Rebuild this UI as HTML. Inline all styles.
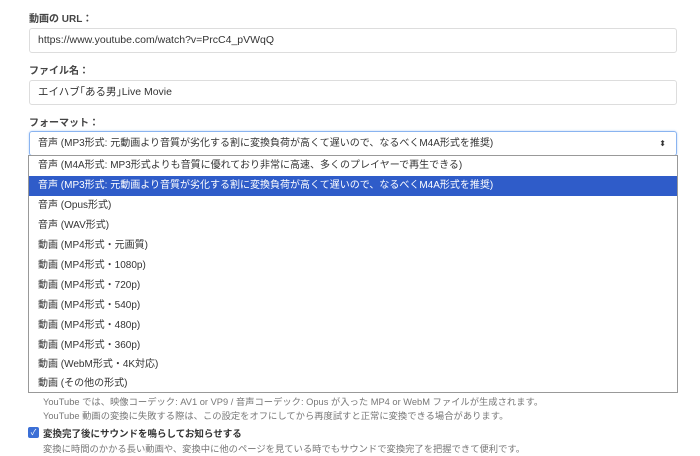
<!DOCTYPE html>
<html><head><meta charset="utf-8"><style>
body{margin:0;width:700px;height:456px;background:#fff;font-family:"Liberation Sans","Noto Sans CJK JP",sans-serif;color:#333;position:relative;overflow:hidden}
.a{position:absolute;white-space:nowrap}
.lbl{font-size:10px;font-weight:bold;color:#444;left:29px}
.inp{left:29px;border:1px solid #ddd;border-radius:3px;font-size:10.5px;line-height:23px;padding-left:8px;box-sizing:border-box;width:648px;height:25px}
.list{left:28px;top:155px;width:650px;height:238px;border:1px solid #999;box-sizing:border-box;background:#fff}
.it{position:absolute;left:0;width:648px;height:20px;line-height:20px;font-size:10px;padding-left:9px;box-sizing:border-box;color:#333}
.hl{background:#2f5cc9;color:#fff}
.help{font-size:9.3px;color:#777;left:43px}
</style></head><body>
<div class="a lbl" style="top:10px">動画の URL：</div>
<div class="a inp" style="top:28px">https://www.youtube.com/watch?v=PrcC4_pVWqQ</div>
<div class="a lbl" style="top:62px">ファイル名：</div>
<div class="a inp" style="top:80px">エイハブ｢ある男｣Live Movie</div>
<div class="a lbl" style="top:114px">フォーマット：</div>
<div class="a inp" style="top:131px;font-size:10px;border-color:#8ab4f0;box-shadow:0 0 2px #b8d2f8">音声 (MP3形式: 元動画より音質が劣化する割に変換負荷が高くて遅いので、なるべくM4A形式を推奨)<span style="position:absolute;right:10px;top:0;font-size:8px">⬍</span></div>
<div class="a list">
<div class="it" style="top:0">音声 (M4A形式: MP3形式よりも音質に優れており非常に高速、多くのプレイヤーで再生できる)</div>
<div class="it hl" style="top:20px">音声 (MP3形式: 元動画より音質が劣化する割に変換負荷が高くて遅いので、なるべくM4A形式を推奨)</div>
<div class="it" style="top:40px">音声 (Opus形式)</div>
<div class="it" style="top:60px">音声 (WAV形式)</div>
<div class="it" style="top:80px">動画 (MP4形式・元画質)</div>
<div class="it" style="top:100px">動画 (MP4形式・1080p)</div>
<div class="it" style="top:120px">動画 (MP4形式・720p)</div>
<div class="it" style="top:140px">動画 (MP4形式・540p)</div>
<div class="it" style="top:160px">動画 (MP4形式・480p)</div>
<div class="it" style="top:180px">動画 (MP4形式・360p)</div>
<div class="it" style="top:199px">動画 (WebM形式・4K対応)</div>
<div class="it" style="top:218px">動画 (その他の形式)</div>
</div>
<div class="a help" style="top:394px">YouTube では、映像コーデック: AV1 or VP9 / 音声コーデック: Opus が入った MP4 or WebM ファイルが生成されます。</div>
<div class="a help" style="top:408px">YouTube 動画の変換に失敗する際は、この設定をオフにしてから再度試すと正常に変換できる場合があります。</div>
<div class="a" style="left:28px;top:427px;width:11px;height:11px;background:#3b6fd6;border-radius:2px;color:#fff;font-size:8px;line-height:11px;text-align:center">✓</div>
<div class="a" style="left:43px;top:426px;font-size:9.5px;font-weight:bold;color:#333">変換完了後にサウンドを鳴らしてお知らせする</div>
<div class="a help" style="top:441px">変換に時間のかかる長い動画や、変換中に他のページを見ている時でもサウンドで変換完了を把握できて便利です。</div>
</body></html>
